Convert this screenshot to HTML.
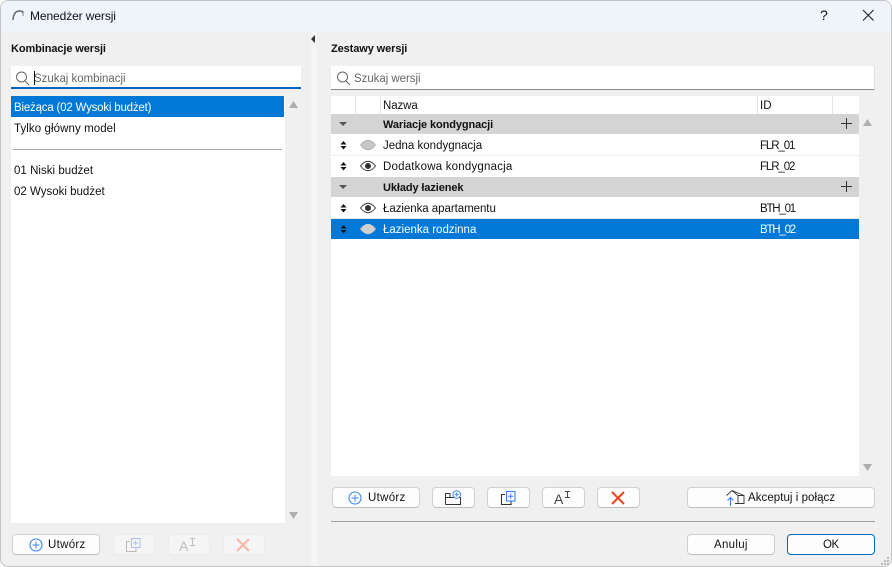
<!DOCTYPE html>
<html><head><meta charset="utf-8"><style>
html,body{margin:0;padding:0;width:892px;height:567px;overflow:hidden;background:#fff}
*{box-sizing:border-box}
#w{position:absolute;left:0;top:0;width:892px;height:567px;background:#f0f0f0;border:1px solid #c4c4c4;border-radius:8px;overflow:hidden;font-family:"Liberation Sans",sans-serif;font-size:11.5px;color:#111}
#w>*{position:absolute}
.t{position:absolute;white-space:nowrap;line-height:16px;letter-spacing:0}
.b{font-weight:bold;letter-spacing:-.1px}
.btn{position:absolute;background:#fdfdfd;border:1px solid #d0d0d0;border-bottom-color:#bdbdbd;border-radius:4px;height:21px}
.dis{background:#f5f5f5;border-color:#ececec}
svg{position:absolute;overflow:visible}
</style></head><body><div id="w">
<div style="left:-1px;top:-1px;width:892px;height:31px;background:#eff4fa"></div>
<svg style="left:10px;top:7px" width="16" height="16" viewBox="0 0 16 16"><path d="M2 12 Q2.500 3 8.500 3 Q12 3 12 5" fill="none" stroke="#666" stroke-width="1.500"/><path d="M12 5 V8" stroke="#aaa" stroke-width="1.500"/></svg>
<div class="t" style="left:29px;top:7px;font-size:12px;letter-spacing:-.1px">Menedżer wersji</div>
<div class="t" style="left:819px;top:6px;font-size:14px">?</div>
<svg style="left:861px;top:8px" width="14" height="14" viewBox="0 0 14 14"><path d="M1 1 L11.500 11.500 M11.500 1 L1 11.500" stroke="#222" stroke-width="1.100" fill="none"/></svg>

<div style="left:310px;top:30px;width:6px;height:540px;background:#f5f5f5"></div>
<svg style="left:309px;top:34px" width="6" height="9"><path d="M5 0 V8 L1 4 Z" fill="#333"/></svg>

<div class="t b" style="left:10px;top:40px;font-size:11px">Kombinacje wersji</div>
<div style="left:10px;top:65px;width:290px;height:23px;background:#fff;border-bottom:2px solid #0067c0"></div>
<svg style="left:14px;top:70px" width="15" height="15" viewBox="0 0 15 15"><circle cx="6.500" cy="6" r="5" fill="none" stroke="#666"/><path d="M10 10 L14 14" stroke="#666" stroke-width="1.100"/></svg>
<div class="t" style="left:33px;top:70px;color:#666;letter-spacing:-.03px">Szukaj kombinacji</div>
<div style="left:33px;top:70px;width:1px;height:14px;background:#111"></div>

<div style="left:10px;top:95px;width:274px;height:427px;background:#fff"></div>
<div style="left:10px;top:95px;width:273px;height:21px;background:#0078d7"></div>
<div class="t" style="left:13px;top:99px;color:#fff;letter-spacing:-.2px">Bieżąca (02 Wysoki budżet)</div>
<div class="t" style="left:13px;top:120px;letter-spacing:.08px">Tylko główny model</div>
<div style="left:12px;top:148px;width:269px;height:1px;background:#a6a6a6"></div>
<div class="t" style="left:13px;top:162px;letter-spacing:.03px">01 Niski budżet</div>
<div class="t" style="left:13px;top:183px">02 Wysoki budżet</div>
<svg style="left:287px;top:100px" width="12" height="8"><path d="M5.500 0 L10 7 H1 Z" fill="#aeaeae"/></svg>
<svg style="left:287px;top:511px" width="12" height="8"><path d="M1 0 H10 L5.500 7 Z" fill="#aeaeae"/></svg>

<div class="btn" style="left:11px;top:533px;width:88px"></div>
<svg style="left:28px;top:537px" width="14" height="14" viewBox="0 0 14 14"><circle cx="7" cy="7" r="6" fill="none" stroke="#3b86f0" stroke-width="1.100"/><path d="M7 3.500 V10.500 M3.500 7 H10.500" stroke="#3b86f0"/></svg>
<div class="t" style="left:47px;top:536px;letter-spacing:.3px">Utwórz</div>
<div class="btn dis" style="left:112px;top:533px;width:42px"></div>
<svg style="left:125px;top:537px" width="16" height="14" viewBox="0 0 16 14"><path d="M4 3.500 H.5 V13.500 H10 V10" fill="none" stroke="#bbb"/><rect x="5.500" y="0.500" width="8.500" height="9" fill="#f5f5f5" stroke="#a9c2ec"/><path d="M9.700 2.500 V7.500 M7.200 5 H12.200" stroke="#a9c2ec"/></svg>
<div class="btn dis" style="left:167px;top:533px;width:42px"></div>
<div class="t" style="left:178px;top:537px;font-size:14px;color:#bbb">A</div>
<svg style="left:189px;top:537px" width="7" height="10"><path d="M0 .5 H5 M2.500 .5 V7.500 M0 7.500 H5" stroke="#bbb" fill="none"/></svg>
<div class="btn dis" style="left:222px;top:533px;width:42px"></div>
<svg style="left:235px;top:537px" width="14" height="14"><path d="M1 1 L13 13 M13 1 L1 13" stroke="#fbb5a6" stroke-width="2"/></svg>

<div class="t b" style="left:330px;top:40px;font-size:11px">Zestawy wersji</div>
<div style="left:330px;top:65px;width:544px;height:24px;background:#fff;border-right:1px solid #e2e2e2;border-bottom:1px solid #8a8a8a"></div>
<svg style="left:335px;top:70px" width="15" height="15" viewBox="0 0 15 15"><circle cx="6.500" cy="6" r="5" fill="none" stroke="#666"/><path d="M10 10 L14 14" stroke="#666" stroke-width="1.100"/></svg>
<div class="t" style="left:353px;top:70px;color:#666;letter-spacing:-.05px">Szukaj wersji</div>

<div style="left:330px;top:95px;width:528px;height:380px;background:#fff"></div>
<div style="left:354px;top:95px;width:1px;height:18px;background:#e6e6e6"></div>
<div style="left:379px;top:95px;width:1px;height:18px;background:#e6e6e6"></div>
<div style="left:756px;top:95px;width:1px;height:18px;background:#e6e6e6"></div>
<div style="left:831px;top:95px;width:1px;height:18px;background:#e6e6e6"></div>
<div class="t" style="left:382px;top:97px;letter-spacing:-.1px">Nazwa</div>
<div class="t" style="left:759px;top:97px">ID</div>

<div style="left:330px;top:113px;width:528px;height:20px;background:#d4d4d4"></div>
<svg style="left:338px;top:121px" width="9" height="5"><path d="M0 0 H8 L4 4 Z" fill="#555"/></svg>
<div class="t b" style="left:382px;top:116px;font-size:11px">Wariacje kondygnacji</div>
<svg style="left:840px;top:117px" width="11" height="11"><path d="M5.500 0 V11 M0 5.500 H11" stroke="#333"/></svg>

<div style="left:330px;top:154px;width:528px;height:1px;background:#eaeaea"></div>
<svg style="left:339px;top:140px" width="7" height="9"><path d="M3.500 0 L6.500 3.500 H.5 Z M.5 5 H6.500 L3.500 8.500 Z" fill="#111"/></svg>
<svg style="left:359px;top:139px" width="16" height="11" viewBox="0 0 16 11"><path d="M.5 5 Q8 -4.500 15.500 5 Q8 14.500 .5 5 Z" fill="#c8c8c8" stroke="#aaa" stroke-width=".8"/></svg>
<div class="t" style="left:382px;top:137px">Jedna kondygnacja</div>
<div class="t" style="left:759px;top:137px;letter-spacing:-1.100px">FLR_01</div>

<svg style="left:339px;top:161px" width="7" height="9"><path d="M3.500 0 L6.500 3.500 H.5 Z M.5 5 H6.500 L3.500 8.500 Z" fill="#111"/></svg>
<svg style="left:359px;top:160px" width="16" height="11" viewBox="0 0 16 11"><path d="M.5 5 Q8 -4.500 15.500 5 Q8 14.500 .5 5 Z" fill="#fff" stroke="#333" stroke-width=".9"/><circle cx="8" cy="5" r="3" fill="#333"/></svg>
<div class="t" style="left:382px;top:158px;letter-spacing:.2px">Dodatkowa kondygnacja</div>
<div class="t" style="left:759px;top:158px;letter-spacing:-1.100px">FLR_02</div>

<div style="left:330px;top:176px;width:528px;height:20px;background:#d4d4d4"></div>
<svg style="left:338px;top:184px" width="9" height="5"><path d="M0 0 H8 L4 4 Z" fill="#555"/></svg>
<div class="t b" style="left:382px;top:179px;font-size:11px">Układy łazienek</div>
<svg style="left:840px;top:180px" width="11" height="11"><path d="M5.500 0 V11 M0 5.500 H11" stroke="#333"/></svg>

<svg style="left:339px;top:203px" width="7" height="9"><path d="M3.500 0 L6.500 3.500 H.5 Z M.5 5 H6.500 L3.500 8.500 Z" fill="#111"/></svg>
<svg style="left:359px;top:202px" width="16" height="11" viewBox="0 0 16 11"><path d="M.5 5 Q8 -4.500 15.500 5 Q8 14.500 .5 5 Z" fill="#fff" stroke="#333" stroke-width=".9"/><circle cx="8" cy="5" r="3" fill="#333"/></svg>
<div class="t" style="left:382px;top:200px;letter-spacing:-.05px">Łazienka apartamentu</div>
<div class="t" style="left:759px;top:200px;letter-spacing:-1.200px">BTH_01</div>
<div style="left:330px;top:217px;width:528px;height:1px;background:#eaeaea"></div>

<div style="left:330px;top:218px;width:528px;height:20px;background:#0078d7"></div>
<svg style="left:339px;top:224px" width="7" height="9"><path d="M3.500 0 L6.500 3.500 H.5 Z M.5 5 H6.500 L3.500 8.500 Z" fill="#111"/></svg>
<svg style="left:359px;top:223px" width="16" height="11" viewBox="0 0 16 11"><path d="M.5 5 Q8 -4.500 15.500 5 Q8 14.500 .5 5 Z" fill="#d0d0d0" stroke="#ccc" stroke-width=".8"/></svg>
<div class="t" style="left:382px;top:221px;color:#fff">Łazienka rodzinna</div>
<div class="t" style="left:759px;top:221px;color:#fff;letter-spacing:-1.200px">BTH_02</div>
<svg style="left:861px;top:118px" width="12" height="8"><path d="M5.500 0 L10 7 H1 Z" fill="#aeaeae"/></svg>
<svg style="left:861px;top:463px" width="12" height="8"><path d="M1 0 H10 L5.500 7 Z" fill="#aeaeae"/></svg>

<div class="btn" style="left:331px;top:486px;width:88px"></div>
<svg style="left:347px;top:490px" width="14" height="14" viewBox="0 0 14 14"><circle cx="7" cy="7" r="6" fill="none" stroke="#3b86f0" stroke-width="1.100"/><path d="M7 3.500 V10.500 M3.500 7 H10.500" stroke="#3b86f0"/></svg>
<div class="t" style="left:367px;top:489px;letter-spacing:.3px">Utwórz</div>
<div class="btn" style="left:431px;top:486px;width:43px"></div>
<svg style="left:444px;top:489px" width="18" height="16" viewBox="0 0 18 16"><path d="M.5 14.500 V3.500 H5 V7 M.5 7.500 H15.500 V14.500 H.5" fill="none" stroke="#333"/><circle cx="11.700" cy="4.500" r="3.800" fill="#fff" stroke="#3b86f0"/><path d="M11.700 2.500 V6.500 M9.700 4.500 H13.700" stroke="#3b86f0"/></svg>
<div class="btn" style="left:486px;top:486px;width:43px"></div>
<svg style="left:499px;top:490px" width="16" height="15" viewBox="0 0 16 15"><path d="M5 3.500 H1.500 V13.500 H11 V10" fill="none" stroke="#333" stroke-width="1.100"/><rect x="6.500" y="0.500" width="8.500" height="9.500" fill="#fff" stroke="#3b86f0" stroke-width="1.100"/><path d="M10.700 2.500 V8 M8 5.200 H13.500" stroke="#3b86f0"/></svg>
<div class="btn" style="left:541px;top:486px;width:43px"></div>
<div class="t" style="left:553px;top:490px;font-size:14px;color:#444">A</div>
<svg style="left:564px;top:490px" width="7" height="10"><path d="M0 .5 H5 M2.500 .5 V6.500 M0 6.500 H5" stroke="#444" fill="none"/></svg>
<div class="btn" style="left:596px;top:486px;width:43px"></div>
<svg style="left:610px;top:490px" width="14" height="14"><path d="M1 1 L13 13 M13 1 L1 13" stroke="#f0431f" stroke-width="2"/></svg>

<div class="btn" style="left:686px;top:486px;width:188px"></div>
<svg style="left:725px;top:489px" width="20" height="18" viewBox="0 0 20 18"><path d="M.5 5.500 L6 .5 L18 5.500 M6 .5 L12 5.500 H18 V13.500 H9 M12 5.500 V13.500" fill="none" stroke="#333" stroke-width=".9"/><path d="M4.500 7.500 V16 M1.500 10.500 L4.500 7.500 L7.500 10.500" fill="none" stroke="#3b86f0" stroke-width="1.100"/></svg>
<div class="t" style="left:747px;top:489px;letter-spacing:.05px">Akceptuj i połącz</div>
<div style="left:330px;top:520px;width:544px;height:1px;background:#a0a0a0"></div>
<div class="btn" style="left:686px;top:533px;width:88px"></div>
<div class="t" style="left:713px;top:536px;letter-spacing:.3px">Anuluj</div>
<div class="btn" style="left:786px;top:533px;width:88px;border:1px solid #0067c0"></div>
<div class="t" style="left:822px;top:536px;letter-spacing:-.5px">OK</div>
<svg style="left:879px;top:555px" width="10" height="10"><path d="M7 1h2v2h-2z M4 4h2v2h-2z M7 4h2v2h-2z M1 7h2v2h-2z M4 7h2v2h-2z M7 7h2v2h-2z" fill="#bbb"/></svg>
</div></body></html>
